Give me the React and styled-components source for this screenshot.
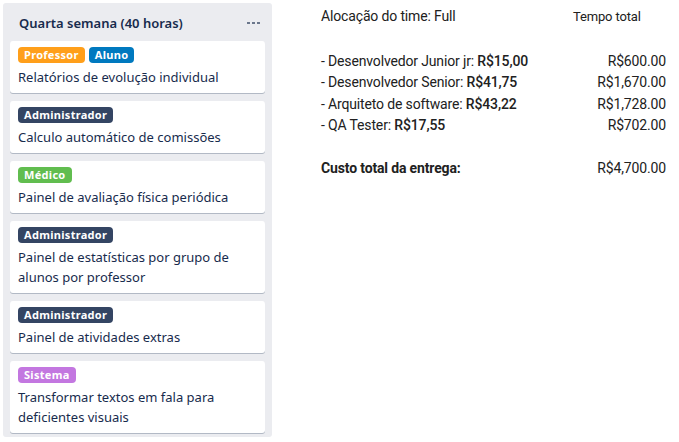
import React from 'react';
import styled, { createGlobalStyle } from 'styled-components';

const GlobalStyle = createGlobalStyle`
  body {
    margin: 0;
    background: #fff;
    font-family: "Noto Sans", "Open Sans", sans-serif;
  }
`;

const Page = styled.div`
  display: flex;
  align-items: flex-start;
  padding: 3px 0 0 3px;
`;

const List = styled.div`
  width: 269px;
  box-sizing: border-box;
  background: #ebecf0;
  border-radius: 3px;
  padding: 0 7px 4px 7px;
`;

const ListHeader = styled.div`
  height: 38px;
  display: flex;
  align-items: center;
  justify-content: space-between;
  padding: 2px 5px 0 9px;
  box-sizing: border-box;
  color: #172b4d;
  font-size: 13px;
  font-weight: 600;
`;

const Cards = styled.div`
  display: flex;
  flex-direction: column;
  gap: 8px;
`;

const Dots = styled.div`
  display: flex;
  gap: 2px;
  span {
    width: 3px;
    height: 2px;
    background: #6b778c;
  }
`;

const Card = styled.div`
  background: #fff;
  border-radius: 3px;
  box-shadow: 0 1px 0 rgba(9, 30, 66, 0.25);
  padding: 6px 8px 6px 8px;
  color: #172b4d;
`;

const Labels = styled.div`
  display: flex;
  gap: 4px;
  margin-bottom: 4px;
`;

const Label = styled.span`
  height: 16px;
  line-height: 16px;
  padding: 0 6px;
  border-radius: 4px;
  background: ${p => p.color};
  color: #fff;
  font-size: 11px;
  font-weight: 700;
  letter-spacing: 0.3px;
`;

const CardTitle = styled.div`
  font-size: 13px;
  line-height: 20px;
`;

const Summary = styled.div`
  margin-left: 49px;
  margin-top: 3px;
  font-family: Roboto, "Liberation Sans", sans-serif;
  color: #212121;
  font-size: 14px;
  letter-spacing: -0.15px;
  display: grid;
  grid-template-columns: 252px 93px;
`;

const Cell = styled.div`
  line-height: 21.5px;
  text-align: ${p => (p.right ? 'right' : 'left')};
  font-size: ${p => (p.small ? '13px' : '14px')};
  font-weight: ${p => (p.bold ? 700 : 400)};
  margin-top: ${p => p.gap || 0}px;
  b {
    font-weight: 500;
  }
`;

const colors = {
  Professor: '#ff9f1a',
  Aluno: '#0079bf',
  Administrador: '#344563',
  'Médico': '#61bd4f',
  Sistema: '#c377e0',
};

const cards = [
  { labels: ['Professor', 'Aluno'], title: 'Relatórios de evolução individual' },
  { labels: ['Administrador'], title: 'Calculo automático de comissões' },
  { labels: ['Médico'], title: 'Painel de avaliação física periódica' },
  { labels: ['Administrador'], title: 'Painel de estatísticas por grupo de alunos por professor' },
  { labels: ['Administrador'], title: 'Painel de atividades extras' },
  { labels: ['Sistema'], title: 'Transformar textos em fala para deficientes visuais' },
];

const roles = [
  { name: 'Desenvolvedor Junior jr', rate: 'R$15,00', total: 'R$600.00' },
  { name: 'Desenvolvedor Senior', rate: 'R$41,75', total: 'R$1,670.00' },
  { name: 'Arquiteto de software', rate: 'R$43,22', total: 'R$1,728.00' },
  { name: 'QA Tester', rate: 'R$17,55', total: 'R$702.00' },
];

export default function App() {
  return (
    <>
      <GlobalStyle />
      <Page>
        <List>
          <ListHeader>
            <span>Quarta semana (40 horas)</span>
            <Dots><span /><span /><span /></Dots>
          </ListHeader>
          <Cards>
            {cards.map((c, i) => (
              <Card key={i}>
                <Labels>
                  {c.labels.map(l => (
                    <Label key={l} color={colors[l]}>{l}</Label>
                  ))}
                </Labels>
                <CardTitle>{c.title}</CardTitle>
              </Card>
            ))}
          </Cards>
        </List>
        <Summary>
          <Cell>Alocação do time: Full</Cell>
          <Cell small>Tempo total</Cell>
          {roles.map((r, i) => (
            <React.Fragment key={r.name}>
              <Cell gap={i === 0 ? 23 : 0}>- {r.name}: <b>{r.rate}</b></Cell>
              <Cell right gap={i === 0 ? 23 : 0}>{r.total}</Cell>
            </React.Fragment>
          ))}
          <Cell bold gap={21}>Custo total da entrega:</Cell>
          <Cell right gap={21}>R$4,700.00</Cell>
        </Summary>
      </Page>
    </>
  );
}
